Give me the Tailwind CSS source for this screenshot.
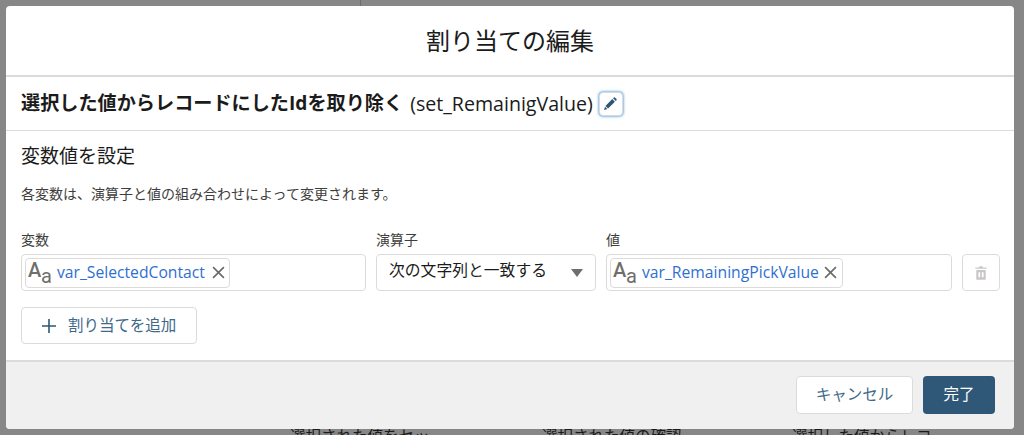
<!DOCTYPE html>
<html lang="ja">
  <head>
    <meta charset="UTF-8" />
    <title>割り当ての編集</title>
    <script src="https://cdn.jsdelivr.net/npm/@tailwindcss/browser@4"></script>
  </head>
  <body class="relative w-[1024px] h-[435px] overflow-hidden bg-[#878787] font-['Open_Sans','Noto_Sans_CJK_JP',sans-serif] text-[#1b1b1b]">
    <!-- Canvas behind the backdrop -->
    <div class="absolute left-[360px] top-0 h-[6px] w-px bg-[#6e6e6e]"></div>
    <div class="absolute left-0 top-[426px] w-full h-[20px] text-[15.5px] leading-[20px] text-[#1a1a1a]">
      <span class="absolute left-[290px] whitespace-nowrap">選択された値をセッ</span>
      <span class="absolute left-[542px] whitespace-nowrap">選択された値の確認</span>
      <span class="absolute left-[792px] whitespace-nowrap">選択した値からレコ</span>
    </div>

    <div class="absolute left-[6px] top-[6px] w-[1008px] h-[423px] flex flex-col rounded-[4px] overflow-hidden bg-white">
      <!-- Title -->
      <header class="h-[71px] shrink-0 flex items-center justify-center border-b-2 border-[#dddbda]">
        <h1 class="text-[24px] leading-[30px] font-normal">割り当ての編集</h1>
      </header>

      <!-- Element name -->
      <div class="h-[54px] shrink-0 flex items-center pl-[15px] border-b border-[#dddbda]">
        <span class="font-bold text-[19.15px] whitespace-nowrap">選択した値からレコードにしたIdを取り除く</span>
        <span class="ml-[7px] text-[19.6px] whitespace-nowrap">(set_RemainigValue)</span>
        <button class="ml-[6px] w-[24px] h-[24px] flex items-center justify-center rounded-[4px] border border-[#dddbda] bg-white shadow-[0_0_3px_#0070d2]">
          <svg viewBox="0 0 16 16" class="w-[15px] h-[15px]" fill="#2c5777">
            <path d="M2.6 10.6 9.900 3.300l2.800 2.800-7.300 7.300zM10.700 2.500l.9-.9a.8.800 0 0 1 1.100 0l1.700 1.700a.8.800 0 0 1 0 1.100l-.9.9zM2.100 11.400l2.500 2.500-3.200.9a.2.200 0 0 1-.2-.2z" />
          </svg>
        </button>
      </div>

      <!-- Assignment rows -->
      <section class="flex-1 pl-[15px] pr-[14px]">
        <h2 class="mt-[13px] text-[19px] leading-[24px] font-normal">変数値を設定</h2>
        <p class="mt-[16px] text-[14px] leading-[20px] text-[#3e3e3c]">各変数は、演算子と値の組み合わせによって変更されます。</p>

        <div class="mt-[26px] flex gap-[10px] items-end">
          <div class="w-[345px]">
            <label class="block h-[24px] text-[14px] leading-[20px] text-[#3e3e3c]">変数</label>
            <div class="h-[37px] flex items-center pl-[3px] rounded-[4px] border border-[#dddbda] bg-white">
              <span class="h-[30px] flex items-center rounded-[4px] border border-[#dddbda] pl-[2px] pr-[4px]">
                <span class="relative w-[27px] h-[28px] text-[#706e6b] leading-none font-medium font-['Roboto']">
                  <span class="absolute left-[0px] top-[1px] text-[20px]">A</span>
                  <span class="absolute left-[13px] top-[7px] text-[20px] font-normal">a</span>
                </span>
                <span class="ml-[2px] text-[15.7px] text-[#2f6fd0] whitespace-nowrap">var_SelectedContact</span>
                <svg viewBox="0 0 12 12" class="ml-[7px] w-[13px] h-[13px]" stroke="#706e6b" stroke-width="1.6" fill="none"><path d="M1 1l10 10M11 1 1 11" /></svg>
              </span>
            </div>
          </div>

          <div class="w-[220px]">
            <label class="block h-[24px] text-[14px] leading-[20px] text-[#3e3e3c]">演算子</label>
            <div class="h-[37px] flex items-center justify-between pl-[12px] pr-[12px] rounded-[4px] border border-[#dddbda] bg-white text-[15.8px]">
              <span class="whitespace-nowrap -mt-[3px]">次の文字列と一致する</span>
              <svg viewBox="0 0 12 8" class="w-[12px] h-[8px]" fill="#706e6b"><path d="M0 0h12L6 8z" /></svg>
            </div>
          </div>

          <div class="w-[346px]">
            <label class="block h-[24px] text-[14px] leading-[20px] text-[#3e3e3c]">値</label>
            <div class="h-[37px] flex items-center pl-[3px] rounded-[4px] border border-[#dddbda] bg-white">
              <span class="h-[30px] flex items-center rounded-[4px] border border-[#dddbda] pl-[2px] pr-[5px]">
                <span class="relative w-[27px] h-[28px] text-[#706e6b] leading-none font-medium font-['Roboto']">
                  <span class="absolute left-[0px] top-[1px] text-[20px]">A</span>
                  <span class="absolute left-[13px] top-[7px] text-[20px] font-normal">a</span>
                </span>
                <span class="ml-[2px] text-[15.7px] text-[#2f6fd0] whitespace-nowrap">var_RemainingPickValue</span>
                <svg viewBox="0 0 12 12" class="ml-[5px] w-[13px] h-[13px]" stroke="#706e6b" stroke-width="1.6" fill="none"><path d="M1 1l10 10M11 1 1 11" /></svg>
              </span>
            </div>
          </div>

          <button class="w-[38px] h-[37px] flex items-center justify-center rounded-[4px] border border-[#dddbda] bg-white">
            <svg viewBox="0 0 14 16" class="w-[12px] h-[14px]" fill="#c9c7c5">
              <path d="M5 0h4v1.500h4.500V3H.5V1.500H5zM1.500 4.500h11V15a1 1 0 0 1-1 1h-9a1 1 0 0 1-1-1zM4 7v6h2V7zm4 0v6h2V7z" />
            </svg>
          </button>
        </div>

        <button class="mt-[16px] w-[176px] h-[37px] flex items-center pl-[20px] rounded-[4px] border border-[#dddbda] bg-white text-[15.5px] text-[#3f6a8a]">
          <svg viewBox="0 0 14 14" class="w-[14px] h-[14px]" stroke="#2c5777" stroke-width="1.6" fill="none"><path d="M7 0v14M0 7h14" /></svg>
          <span class="ml-[12px] whitespace-nowrap">割り当てを追加</span>
        </button>
      </section>

      <!-- Actions -->
      <footer class="h-[69px] shrink-0 flex items-start justify-end gap-[10px] pt-[14px] pr-[19px] bg-[#f0f0f0] border-t-2 border-[#dddbda]">
        <button class="w-[117px] h-[38px] rounded-[4px] border border-[#dddbda] bg-white text-[15.5px] text-[#3f6a8a]">キャンセル</button>
        <button class="w-[72px] h-[38px] rounded-[4px] bg-[#2f5878] text-[15.5px] text-white">完了</button>
      </footer>
    </div>
  </body>
</html>
